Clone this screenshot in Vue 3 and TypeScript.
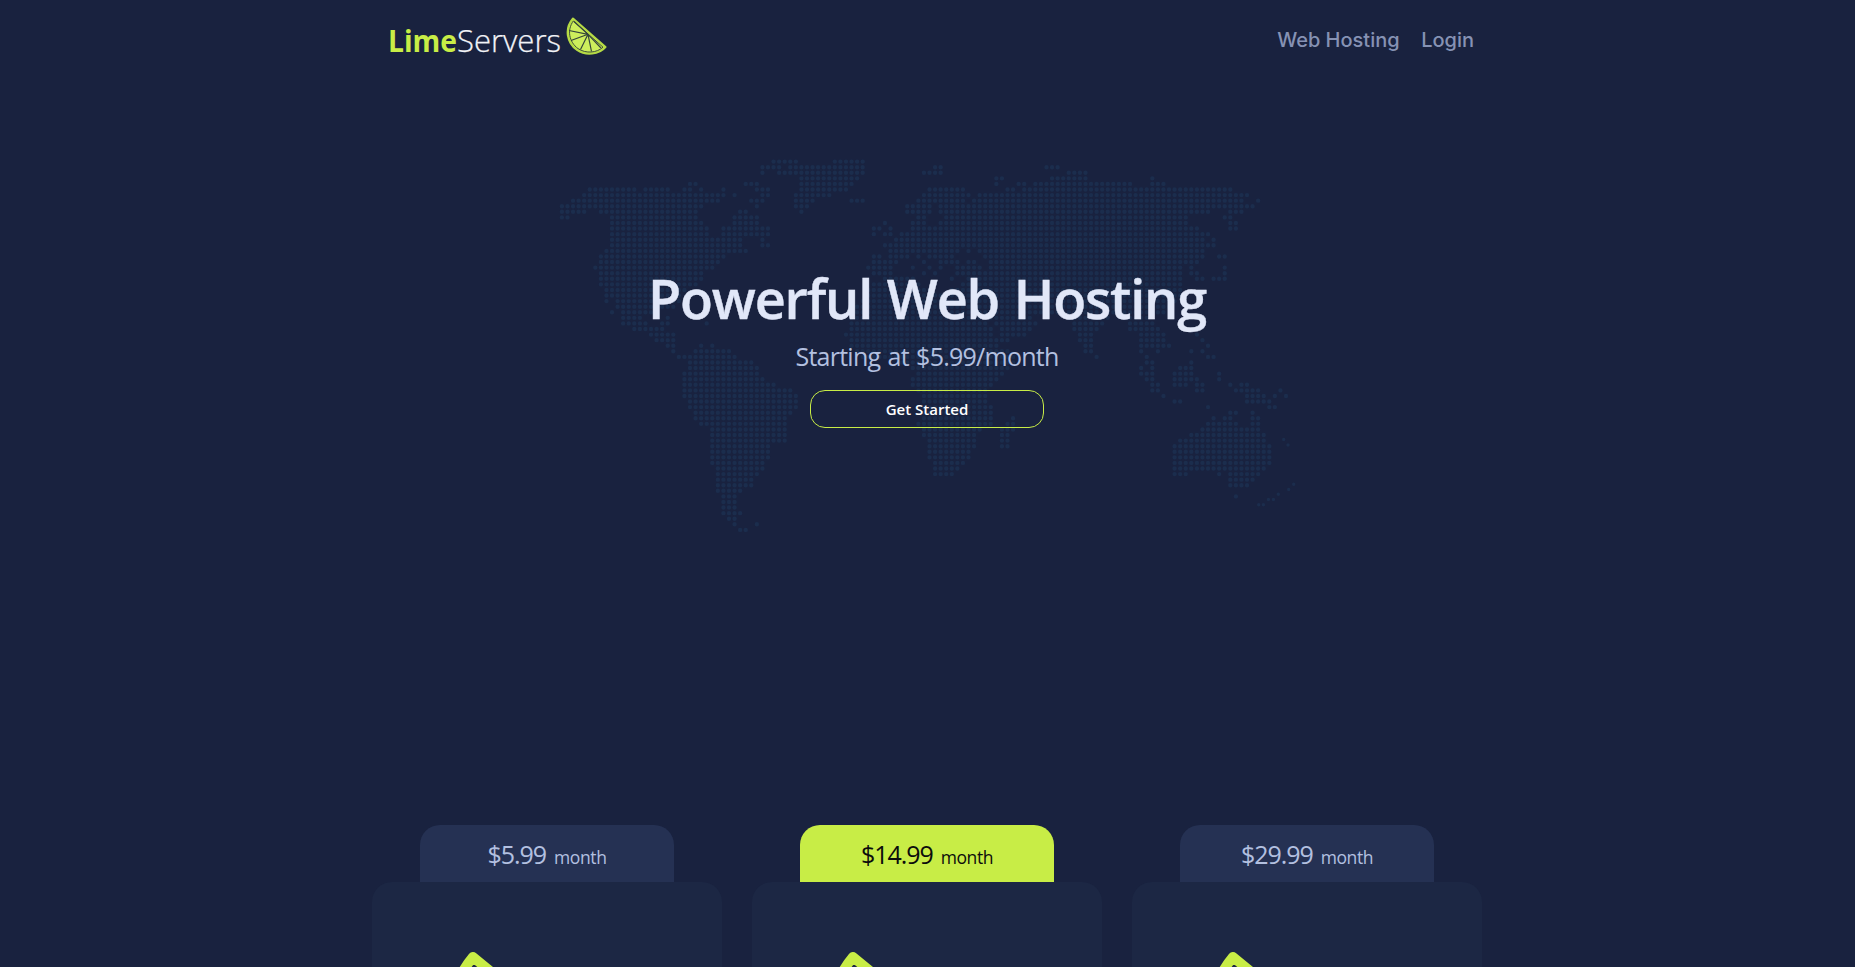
<script setup lang="ts">
interface Plan {
  price: string
  featured: boolean
}

const plans: Plan[] = [
  { price: '$5.99', featured: false },
  { price: '$14.99', featured: true },
  { price: '$29.99', featured: false },
]

// Each line is one row of map dots, written as column ranges.
const mapRows: string[] = [
  '38-42 49-54',
  '36-39 41-54 67-68 87-89',
  '36 39-54 65-68 91-94',
  '43-53 78-79 88-94 106',
  '23-24 33-35 43-52 78 82-83 85-102 106-108',
  '5-13 15-19 22-23 25 29 35-37 43-51 66-72 80-81 83-120',
  '4-29 31 36-37 42-48 65-73 75-123',
  '2-28 34-36 42-45 52-54 64-72 74-122 125',
  '0-25 35 42-44 62-66 68-124',
  '0-4 7-24 32-33 43 62-66 68-116 120-122',
  '0-1 9-24 31-35 64-65 69-112 119-120',
  '9-25 31-35 58 63-65 68-112 120-121',
  '9-26 29-37 56-57 59 63-114 120-121',
  '9-26 29-37 56 58-59 61-116',
  '9-32 36 60-115 117',
  '9-32 36-37 58-117',
  '8-33 59-71 73 75-115',
  '7-29 56-57 59-62 64 66-70 76-115 118-119',
  '7-28 56-60 65 68-71 73-74 77-114',
  '6-27 55-59 63 66 68 71-75 77-111 113 119',
  '7-25 56-59 65 67 71-111 113-114 119',
  '7-25 58-63 70 73-111 114-115 117-119',
  '7-24 56-64 72-111',
  '8-22 55-66 70-111',
  '8-21 55-111',
  '8 10-21 54-110',
  '10-20 53-109',
  '9 11-17 53-108',
  '11-14 19 52-84 91-98 101-105',
  '11-15 18-19 26 52-76 78-85 92-97 102-106',
  '13-18 52-77 79-84 92-96 102-107',
  '16-20 51-77 79-83 93-95 104-108 114',
  '17-20 52-80 93-95 104-108 115',
  '19-20 25 27 52-78 94-95 104-109 116',
  '20 24-30 53-80 94-95 104 107 113 115',
  '21-31 54-81 96 105 116-117',
  '23-34 61-81 105-106 113',
  '23-35 63-80 104 106 111-113',
  '22-35 64-79 104-106 110-113 118',
  '22-36 63-78 105-106 110-114 118',
  '22-38 63-77 106-107 110-112 114-115 120 122-123',
  '22-41 64-76 106-107 114-115 121-125 129',
  '22-42 65-76 108 123-126 128 130',
  '23-42 65-76 110-111 123-127',
  '23-42 65-77 116 127-128',
  '24-41 65-77 120-121 124',
  '24-40 65-77 81 117 119-120 124-125',
  '25-40 64-77 80-81 116-121 124-125',
  '27-40 65-75 79-81 115-125',
  '27-40 65-74 79-80 113-126',
  '27-40 66-74 79-80 111-126',
  '27-37 66-74 79-80 110-127',
  '27-37 66-73 110-127',
  '27-37 66-73 110-127',
  '27-36 67-72 110-127',
  '28-36 67-71 110-126',
  '28-35 67-70 110-112 118 120-125',
  '28-34 120-124',
  '28-34 120-123',
  '28-32',
  '29-31 121',
  '29-31',
  '29-31',
  '29-32',
  '30-31',
  '31 35',
  '32-33',
]

const smallDots: [number, number][] = [
  [728.7, 282.5], [733, 288], [738.7, 327.2], [733.7, 332.5], [723.3, 337.2],
  [713.4, 342.5], [718.4, 342.5], [703.7, 347.8], [708.4, 347.8],
]

const dot = (x: number, y: number): string => `M${x.toFixed(2)} ${y.toFixed(2)}h0`

const mapPath: string = mapRows
  .map((row, r) =>
    row
      .split(' ')
      .map((range) => {
        const [from, to = from] = range.split('-').map(Number)
        let d = ''
        for (let c = from; c <= to; c++) d += dot(6.9 + c * 5.57, 4.6 + r * 5.58)
        return d
      })
      .join(''),
  )
  .join('')

const smallPath: string = smallDots.map(([x, y]) => dot(x, y)).join('')
</script>

<template>
  <div class="page">
    <header class="nav">
      <a class="brand">
        <svg class="wordmark" width="174" height="40" viewBox="0 0 174 40">
          <text class="lime" x="0" y="31.5" textLength="69" lengthAdjust="spacingAndGlyphs">Lime</text>
          <text class="servers" x="69" y="31.5" textLength="104" lengthAdjust="spacingAndGlyphs">Servers</text>
        </svg>
        <svg class="slice" width="42" height="40" viewBox="0 0 42 40">
          <path d="M7 1.5 39.5 30C33 37.5 20 39 11 33 1 26-2 12 7 1.5Z" fill="#c8ed46" stroke="#b5da45" stroke-width="2" stroke-linejoin="round" />
          <path d="M7.3 4 37 30.2C31 35.8 20 37 12 31.6 3 25 .8 13 7.3 4Z" fill="#cdee5c" stroke="#3c4c3c" stroke-width="1" />
          <path d="M22 17.3 8 4.5M22 17.3 3 13.5M22 17.3 5 23.5M22 17.3 14.5 32.5M22 17.3 25.5 34.5M22 17.3 35 31" fill="none" stroke="#34443c" stroke-width="1.2" />
        </svg>
      </a>
      <nav class="links">
        <a>Web Hosting</a>
        <a>Login</a>
      </nav>
    </header>

    <section class="hero">
      <svg class="map" width="744" height="380" viewBox="0 0 744 380">
        <path class="dots" :d="mapPath" />
        <path class="dots small" :d="smallPath" />
      </svg>
      <div class="pitch">
        <h1>Powerful Web Hosting</h1>
        <p>Starting at $5.99/month</p>
        <button type="button">Get Started</button>
      </div>
    </section>

    <section class="plans">
      <article v-for="plan in plans" :key="plan.price" class="plan" :class="{ featured: plan.featured }">
        <div class="tab">
          <span class="price">{{ plan.price }}</span>
          <span class="term">month</span>
        </div>
        <div class="card">
          <svg class="card-icon" width="190" height="160" viewBox="0 0 190 160">
            <path d="M22 6 182 138C145 168 70 172 28 130-8 94-8 42 22 6Z" fill="none" stroke="#c8ed46" stroke-width="10" stroke-linejoin="round" />
          </svg>
        </div>
      </article>
    </section>
  </div>
</template>

<style>
html,
body {
  margin: 0;
  overflow: hidden;
  background: #19223f;
}
</style>

<style scoped>
.page {
  width: 1854px;
  height: 967px;
  overflow: hidden;
  display: flex;
  flex-direction: column;
  align-items: center;
  background: #19223f;
  font-family: "Open Sans", "Noto Sans", sans-serif;
}
.nav {
  width: 1094px;
  height: 80px;
  flex: none;
  display: flex;
  justify-content: space-between;
  box-sizing: border-box;
  padding-left: 8px;
}
.brand {
  display: flex;
  padding-top: 17px;
}
.wordmark {
  margin-top: 3px;
  overflow: visible;
}
.wordmark text {
  font-size: 31px;
}
.lime {
  font-weight: 700;
  fill: #c8ed46;
}
.servers {
  font-weight: 300;
  fill: #f2f3f7;
  stroke: #f2f3f7;
  stroke-width: 0.25px;
}
.slice {
  margin-left: 4px;
}
.links {
  display: flex;
  gap: 21.5px;
  padding-top: 26px;
  font: 500 20px/28px Inter, sans-serif;
  color: #8692b4;
}
.hero {
  width: 744px;
  height: 745px;
  flex: none;
  display: grid;
  justify-items: center;
  align-items: start;
}
.map,
.pitch {
  grid-area: 1 / 1;
}
.map {
  margin-top: 77.2px;
}
.dots {
  fill: none;
  stroke: #1b2d4d;
  stroke-width: 4.4;
  stroke-linecap: round;
}
.small {
  stroke-width: 3.4;
}
.pitch {
  display: flex;
  flex-direction: column;
  align-items: center;
  padding-top: 182px;
  z-index: 1;
}
h1 {
  margin: 0;
  font-size: 54px;
  line-height: 72px;
  font-weight: 600;
  letter-spacing: -1.2px;
  word-spacing: 2px;
  white-space: nowrap;
  color: #e1e7f8;
  -webkit-text-stroke: 0.4px #e1e7f8;
}
p {
  margin: 4px 0 0;
  font-size: 25px;
  line-height: 36px;
  letter-spacing: -0.75px;
  word-spacing: 1.5px;
  white-space: nowrap;
  color: #b3c0e0;
}
button {
  width: 234px;
  height: 38px;
  margin-top: 16px;
  padding: 0;
  border: 1px solid #c8ed46;
  border-radius: 15px;
  background: transparent;
  color: #fff;
  font: 600 15px/34px "Open Sans", sans-serif;
}
.plans {
  display: flex;
  gap: 30px;
}
.plan {
  width: 350px;
  display: flex;
  flex-direction: column;
  align-items: center;
}
.tab {
  width: 254px;
  height: 57px;
  box-sizing: border-box;
  display: flex;
  justify-content: center;
  align-items: baseline;
  gap: 8px;
  padding-top: 11px;
  border-radius: 20px 20px 0 0;
  background: #253153;
  color: #b3c0e0;
}
.featured .tab {
  background: #c8ed46;
  color: #0c0c0c;
}
.price {
  font-size: 25px;
  line-height: 36px;
  letter-spacing: -1.05px;
}
.term {
  font-size: 17.5px;
  letter-spacing: -0.4px;
}
.card {
  width: 350px;
  height: 320px;
  box-sizing: border-box;
  padding: 69px 79px 0;
  border-radius: 20px;
  background: #1c2744;
}
.card-icon {
  display: block;
}
</style>
